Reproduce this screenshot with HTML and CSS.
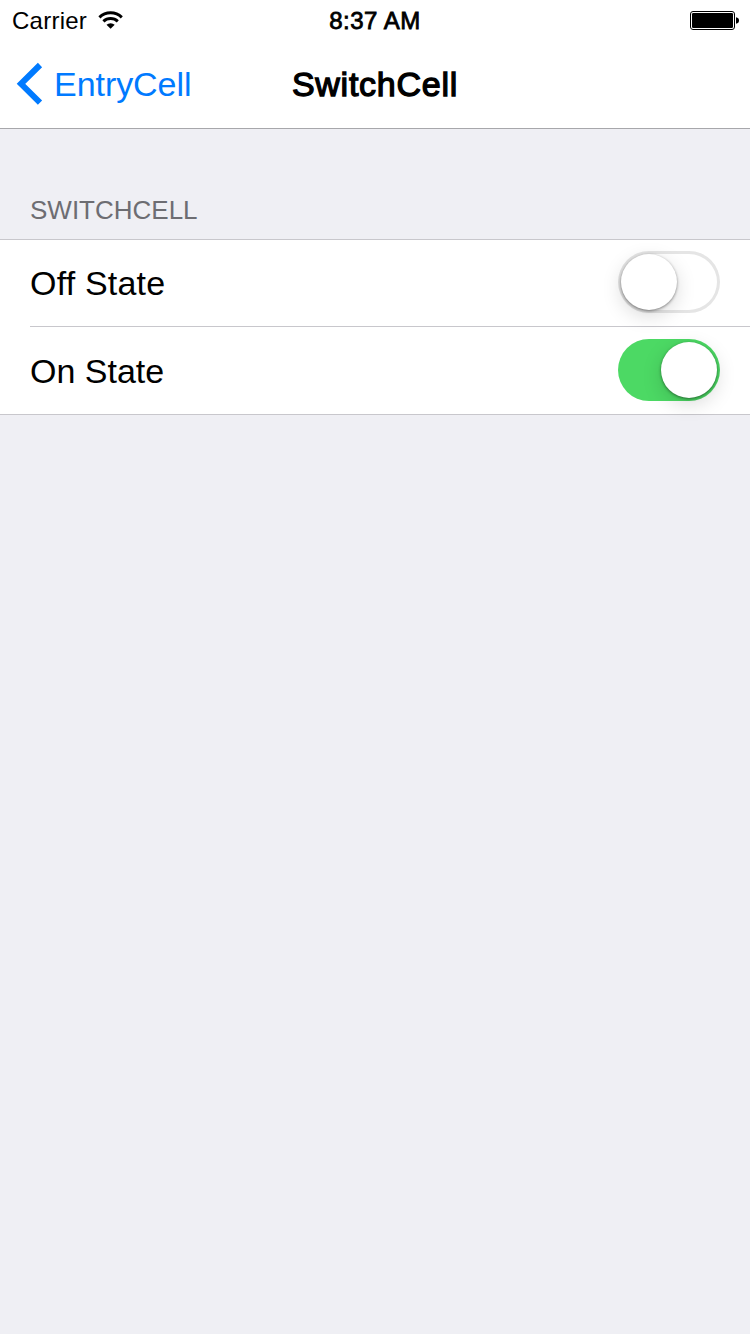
FILE: index.html
```html
<!DOCTYPE html>
<html lang="en">
<head>
<meta charset="utf-8">
<title>SwitchCell</title>
<link rel="stylesheet" href="styles.css">
</head>
<body>
<header class="header">
  <div class="status">
    <div class="status-left">
      <span class="carrier">Carrier</span>
      <svg class="wifi" width="26" height="20" viewBox="0 0 26 20">
        <g fill="none" stroke="#000" stroke-width="3">
          <path d="M1.4 7.3A16.3 16.3 0 0 1 23.8 7.3"/>
          <path d="M5.4 11.4A10.6 10.6 0 0 1 19.8 11.4"/>
        </g>
        <path d="M8.5 14.8A6.2 6.2 0 0 1 16.7 14.8L12.6 18.8Z"/>
      </svg>
    </div>
    <span class="time">8:37 AM</span>
    <svg class="battery" width="50" height="20" viewBox="0 0 50 20">
      <rect x=".5" y=".5" width="44" height="18" rx="2.5" fill="#fff" stroke="#000"/>
      <rect x="2" y="2" width="41" height="15" rx="1.2"/>
      <path d="M46 6.2C48 6.6 49 7.7 49 9.5S48 12.4 46 12.8Z"/>
    </svg>
  </div>
  <nav class="nav">
    <a class="back">
      <svg width="28" height="44" viewBox="0 0 28 44">
        <path d="M24 3L5 21.8L24 40.6" fill="none" stroke="#007aff" stroke-width="6"/>
      </svg>
      <span class="back-label">EntryCell</span>
    </a>
    <h1 class="title">SwitchCell</h1>
  </nav>
</header>
<main>
  <h2 class="section-title">SWITCHCELL</h2>
  <div class="list">
    <div class="row">
      <span class="label off-label">Off State</span>
      <span class="switch"><span class="knob"></span></span>
    </div>
    <div class="row">
      <span class="label">On State</span>
      <span class="switch on"><span class="knob"></span></span>
    </div>
  </div>
</main>
</body>
</html>
```
FILE: styles.css
```css
* { box-sizing: border-box; }
body {
  margin: 0;
  min-height: 1334px;
  background: #efeff4;
  color: #000;
  font-family: "Liberation Sans", Arial, sans-serif;
}
.header {
  height: 129px;
  background: #fff;
  border-bottom: 1px solid #a7a7ab;
}
.status {
  display: grid;
  grid-template-columns: 1fr auto 1fr;
  height: 40px;
  padding: 0 10px 0 12px;
  font-size: 24px;
  line-height: 41px;
}
.status-left { display: flex; }
.carrier { width: 86px; letter-spacing: 0.25px; }
.wifi { margin-top: 10px; }
.time {
  margin-left: -2px;
  letter-spacing: 0.5px;
  -webkit-text-stroke: 0.8px #000;
}
.battery { justify-self: end; margin-top: 11px; }
.nav {
  display: grid;
  grid-template-columns: 1fr auto 1fr;
  height: 88px;
  padding: 0 16px;
  font-size: 34px;
  line-height: 89px;
}
.back { display: flex; color: #007aff; }
.back svg { margin-top: 22px; }
.back-label { margin-left: 10px; letter-spacing: -0.05px; }
.title {
  margin: 0;
  font-size: 34px;
  font-weight: 400;
  letter-spacing: 0.75px;
  -webkit-text-stroke: 1.3px #000;
}
.section-title {
  margin: 0;
  height: 110px;
  padding: 66px 30px 0;
  color: #6d6d72;
  font-size: 26px;
  font-weight: 400;
  line-height: 30px;
}
.list {
  background: #fff;
  border: solid #c8c7cc;
  border-width: 1px 0;
}
.row {
  display: flex;
  justify-content: space-between;
  height: 86px;
  margin-left: 30px;
  padding: 11px 30px 0 0;
}
.row + .row {
  height: 88px;
  border-top: 1px solid #c8c7cc;
  padding-top: 12px;
}
.label { font-size: 34px; line-height: 65px; }
.off-label { letter-spacing: 0.2px; }
.switch {
  display: flex;
  width: 102px;
  height: 62px;
  padding: 3px;
  border-radius: 31px;
  box-shadow: inset 0 0 0 3px #e5e5e5;
}
.switch.on {
  justify-content: flex-end;
  background: #4cd964;
  box-shadow: none;
}
.knob {
  width: 56px;
  height: 56px;
  border-radius: 50%;
  background: #fff;
  box-shadow: 0 1px 3px rgba(0, 0, 0, 0.45), 0 6px 20px rgba(0, 0, 0, 0.15);
}
```
